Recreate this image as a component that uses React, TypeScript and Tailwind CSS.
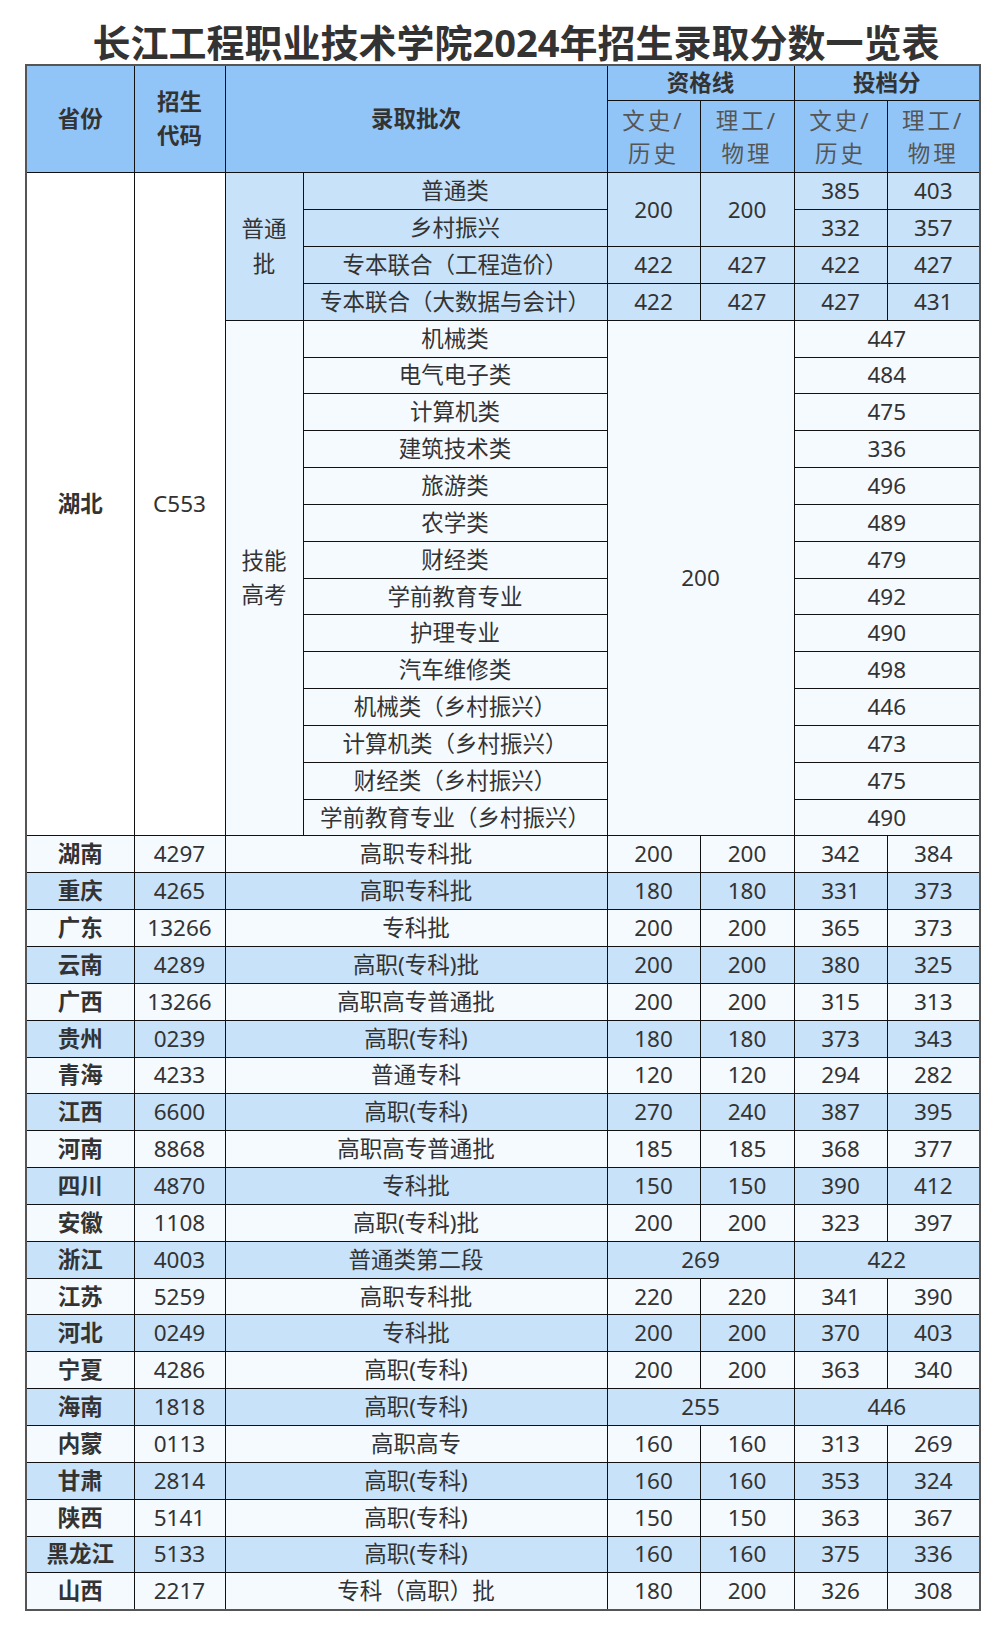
import React from "react";

const HB = "bg-[#92c5f7]";
const BL = "bg-[#c8e2f9]";
const PL = "bg-[#f5faff]";
const td = "border border-[#111] text-center align-middle p-0 leading-[26px]";

const majors: [string, string][] = [
  ["机械类", "447"],
  ["电气电子类", "484"],
  ["计算机类", "475"],
  ["建筑技术类", "336"],
  ["旅游类", "496"],
  ["农学类", "489"],
  ["财经类", "479"],
  ["学前教育专业", "492"],
  ["护理专业", "490"],
  ["汽车维修类", "498"],
  ["机械类（乡村振兴）", "446"],
  ["计算机类（乡村振兴）", "473"],
  ["财经类（乡村振兴）", "475"],
  ["学前教育专业（乡村振兴）", "490"],
];

type P = [string, string, string, string, string | null, string, string | null];
const provinces: P[] = [
  ["湖南", "4297", "高职专科批", "200", "200", "342", "384"],
  ["重庆", "4265", "高职专科批", "180", "180", "331", "373"],
  ["广东", "13266", "专科批", "200", "200", "365", "373"],
  ["云南", "4289", "高职(专科)批", "200", "200", "380", "325"],
  ["广西", "13266", "高职高专普通批", "200", "200", "315", "313"],
  ["贵州", "0239", "高职(专科)", "180", "180", "373", "343"],
  ["青海", "4233", "普通专科", "120", "120", "294", "282"],
  ["江西", "6600", "高职(专科)", "270", "240", "387", "395"],
  ["河南", "8868", "高职高专普通批", "185", "185", "368", "377"],
  ["四川", "4870", "专科批", "150", "150", "390", "412"],
  ["安徽", "1108", "高职(专科)批", "200", "200", "323", "397"],
  ["浙江", "4003", "普通类第二段", "269", null, "422", null],
  ["江苏", "5259", "高职专科批", "220", "220", "341", "390"],
  ["河北", "0249", "专科批", "200", "200", "370", "403"],
  ["宁夏", "4286", "高职(专科)", "200", "200", "363", "340"],
  ["海南", "1818", "高职(专科)", "255", null, "446", null],
  ["内蒙", "0113", "高职高专", "160", "160", "313", "269"],
  ["甘肃", "2814", "高职(专科)", "160", "160", "353", "324"],
  ["陕西", "5141", "高职(专科)", "150", "150", "363", "367"],
  ["黑龙江", "5133", "高职(专科)", "160", "160", "375", "336"],
  ["山西", "2217", "专科（高职）批", "180", "200", "326", "308"],
];

const RH = "h-[36.85px]";

export default function App() {
  return (
    <div
      className="w-[1000px] h-[1632px] bg-white text-[#333] pt-[22px]"
      style={{ fontFamily: '"Noto Sans", "Noto Sans CJK SC", sans-serif' }}
    >
      <div className="h-[42px] pl-[32px] text-center text-[38px] leading-[40px] font-bold text-[#333]">
        长江工程职业技术学院2024年招生录取分数一览表
      </div>
      <table className="ml-[25px] w-[954px] table-fixed border-collapse border-2 border-[#555] text-[22.5px]">
        <colgroup>
          <col className="w-[108px]" />
          <col className="w-[91px]" />
          <col className="w-[78px]" />
          <col className="w-[304px]" />
          <col className="w-[93px]" />
          <col className="w-[94px]" />
          <col className="w-[93px]" />
          <col className="w-[93px]" />
        </colgroup>
        <thead>
          <tr className={`h-[35.5px] ${HB}`}>
            <th rowSpan={2} className={`${td} font-bold`}>省份</th>
            <th rowSpan={2} className={`${td} font-bold leading-[34px]`}>
              招生
              <br />
              代码
            </th>
            <th rowSpan={2} colSpan={2} className={`${td} font-bold`}>录取批次</th>
            <th colSpan={2} className={`${td} font-bold`}>资格线</th>
            <th colSpan={2} className={`${td} font-bold`}>投档分</th>
          </tr>
          <tr className={`h-[72.3px] ${HB}`}>
            {[0, 1, 2, 3].map((i) => (
              <th key={i} className={`${td} font-normal text-[#555] leading-[33px] tracking-[3px]`}>
                {i % 2 === 0 ? "文史/" : "理工/"}
                <br />
                {i % 2 === 0 ? "历史" : "物理"}
              </th>
            ))}
          </tr>
        </thead>
        <tbody>
          <tr className={`${RH} ${BL}`}>
            <td rowSpan={18} className={`${td} bg-white font-bold`}>湖北</td>
            <td rowSpan={18} className={`${td} bg-white`}>C553</td>
            <td rowSpan={4} className={`${td} leading-[35px]`}>
              普通
              <br />
              批
            </td>
            <td className={td}>普通类</td>
            <td rowSpan={2} className={td}>200</td>
            <td rowSpan={2} className={td}>200</td>
            <td className={td}>385</td>
            <td className={td}>403</td>
          </tr>
          <tr className={`${RH} ${BL}`}>
            <td className={td}>乡村振兴</td>
            <td className={td}>332</td>
            <td className={td}>357</td>
          </tr>
          <tr className={`${RH} ${BL}`}>
            <td className={td}>专本联合（工程造价）</td>
            <td className={td}>422</td>
            <td className={td}>427</td>
            <td className={td}>422</td>
            <td className={td}>427</td>
          </tr>
          <tr className={`${RH} ${BL}`}>
            <td className={td}>专本联合（大数据与会计）</td>
            <td className={td}>422</td>
            <td className={td}>427</td>
            <td className={td}>427</td>
            <td className={td}>431</td>
          </tr>
          {majors.map(([m, s], i) => (
            <tr key={m} className={`${RH} ${PL}`}>
              {i === 0 && (
                <td rowSpan={14} className={`${td} leading-[34px]`}>
                  技能
                  <br />
                  高考
                </td>
              )}
              <td className={td}>{m}</td>
              {i === 0 && (
                <td rowSpan={14} colSpan={2} className={td}>
                  200
                </td>
              )}
              <td colSpan={2} className={td}>
                {s}
              </td>
            </tr>
          ))}
          {provinces.map((p, i) => (
            <tr key={p[0]} className={`${RH} ${i % 2 === 0 ? PL : BL}`}>
              <td className={`${td} font-bold`}>{p[0]}</td>
              <td className={td}>{p[1]}</td>
              <td colSpan={2} className={td}>{p[2]}</td>
              {p[4] === null ? (
                <td colSpan={2} className={td}>{p[3]}</td>
              ) : (
                <>
                  <td className={td}>{p[3]}</td>
                  <td className={td}>{p[4]}</td>
                </>
              )}
              {p[6] === null ? (
                <td colSpan={2} className={td}>{p[5]}</td>
              ) : (
                <>
                  <td className={td}>{p[5]}</td>
                  <td className={td}>{p[6]}</td>
                </>
              )}
            </tr>
          ))}
        </tbody>
      </table>
    </div>
  );
}
